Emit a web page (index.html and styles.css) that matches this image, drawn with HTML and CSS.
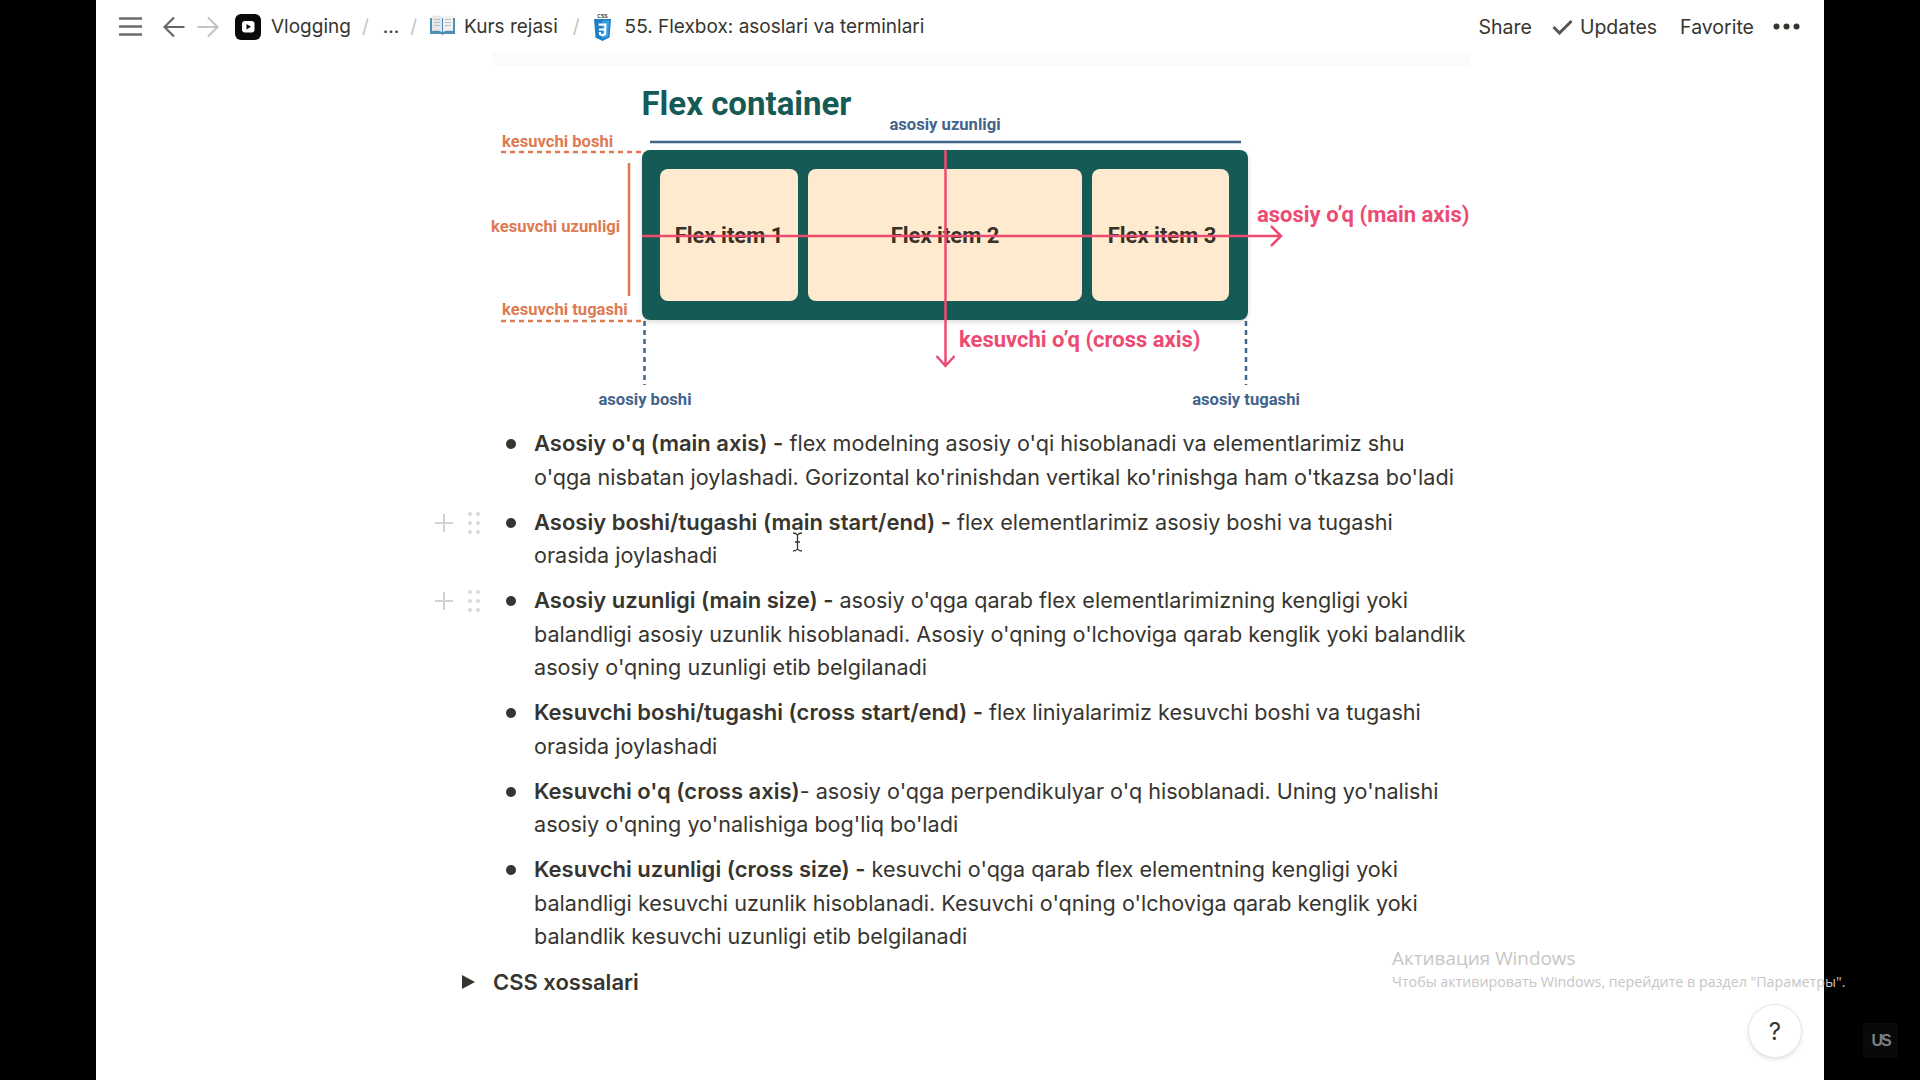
FILE: index.html
```html
<!DOCTYPE html>
<html lang="en">

<head>
    <meta charset="UTF-8">
    <title>55. Flexbox: asoslari va terminlari</title>
    <link rel="stylesheet" href="styles.css">
</head>

<body>
    <div class="app">
        <header class="topbar">
            <svg class="icon-menu" width="23" height="19" viewBox="0 0 23 19">
                <path d="M0 1.5H23M0 9.5H23M0 17.5H23" stroke="#6b6b6b" stroke-width="2.4" fill="none" />
            </svg>
            <svg class="icon-back" width="22" height="22" viewBox="0 0 22 22">
                <path d="M21.5 11H2M11 1.5L1.5 11L11 20.5" stroke="#666" stroke-width="2.2" fill="none" />
            </svg>
            <svg class="icon-forward" width="22" height="22" viewBox="0 0 22 22">
                <path d="M0.5 11H20M11 1.5L20.5 11L11 20.5" stroke="#c4c4c4" stroke-width="2.2" fill="none" />
            </svg>
            <svg class="icon-vlog" width="26" height="26" viewBox="0 0 26 26">
                <rect width="26" height="26" rx="6" fill="#0a0a0a" />
                <rect x="7" y="7" width="12.500" height="11.500" rx="3" fill="#fff" />
                <path d="M11.500 10L16 12.800L11.500 15.500Z" fill="#0a0a0a" />
            </svg>
            <span class="crumb crumb-vlog">Vlogging</span>
            <span class="slash slash-first">/</span>
            <span class="crumb crumb-more">...</span>
            <span class="slash slash-second">/</span>
            <svg class="icon-book" width="25" height="20" viewBox="0 0 25 20">
                <path d="M0 3H25V19H14L12.500 20L11 19H0Z" fill="#4f8db3" />
                <path d="M2 1C6 0 10 0.500 12 2V17C10 15.500 6 15.500 2 16Z" fill="#e6e8ea" />
                <path d="M23 1C19 0 15 0.500 13 2V17C15 15.500 19 15.500 23 16Z" fill="#f1f1f1" />
                <path d="M4 4.500H10M4 7.500H10M4 10.500H10M15 4.500H21M15 7.500H21M15 10.500H21" stroke="#b9bcc0" stroke-width="1" />
            </svg>
            <span class="crumb crumb-course">Kurs rejasi</span>
            <span class="slash slash-third">/</span>
            <svg class="icon-css" width="17" height="28" viewBox="0 0 17 28">
                <text class="css-label" x="8.500" y="4.500">CSS</text>
                <path d="M0 6H17L15.500 24.500L8.500 28L1.500 24.500Z" fill="#1f7fc4" />
                <path d="M8.500 7.500H15.300L14 23.500L8.500 26Z" fill="#3aa0e0" />
                <path d="M4.500 10.500H12.500L12 22L8.500 23.500L5 22L4.800 19H7L7.100 20.500L8.500 21L10 20.500L10.200 17.500H5V15.500H10.300L10.400 12.800H4.600Z" fill="#fff" />
            </svg>
            <span class="crumb crumb-page">55. Flexbox: asoslari va terminlari</span>

            <div class="actions">
                <span class="share">Share</span>
                <span class="updates">
                    <svg width="21" height="16" viewBox="0 0 21 16">
                        <path d="M1.500 8L7.500 14L19.500 2" stroke="#555" stroke-width="3" fill="none" />
                    </svg>
                    Updates
                </span>
                <span>Favorite</span>
                <svg class="icon-dots" width="27" height="7" viewBox="0 0 27 7">
                    <circle cx="3.500" cy="3.500" r="3" fill="#37352f" />
                    <circle cx="13.500" cy="3.500" r="3" fill="#37352f" />
                    <circle cx="23.500" cy="3.500" r="3" fill="#37352f" />
                </svg>
            </div>
        </header>

        <main class="content">
            <!-- diagram uses the page coordinates as its viewBox -->
            <svg class="diagram" width="977" height="374" viewBox="492 53 977 374">
                <rect x="492" y="53" width="977" height="13" fill="#fbfbfb" />
                <text class="d-title" x="641.500" y="114.500">Flex container</text>

                <text class="d-blue" x="945" y="130" text-anchor="middle">asosiy uzunligi</text>
                <path d="M650 142H1241" stroke="#41648b" stroke-width="2.500" />

                <text class="d-orange" x="502" y="147">kesuvchi boshi</text>
                <text class="d-orange" x="491" y="232">kesuvchi uzunligi</text>
                <text class="d-orange" x="502" y="315">kesuvchi tugashi</text>
                <path d="M501 152H642M501 321H642" stroke="#dd7a52" stroke-width="2.500" stroke-dasharray="5 4" />
                <path d="M629 163V296" stroke="#dd7a52" stroke-width="2.500" />

                <rect class="d-box" x="642" y="150" width="606" height="170" rx="8" fill="#165a55" />
                <rect x="660" y="169" width="138" height="132" rx="8" fill="#fdeacf" />
                <rect x="808" y="169" width="274" height="132" rx="8" fill="#fdeacf" />
                <rect x="1092" y="169" width="137" height="132" rx="8" fill="#fdeacf" />
                <text class="d-item" x="729" y="243" text-anchor="middle">Flex item 1</text>
                <text class="d-item" x="945" y="243" text-anchor="middle">Flex item 2</text>
                <text class="d-item" x="1162" y="243" text-anchor="middle">Flex item 3</text>

                <path d="M644.500 321V385M1246 321V385" stroke="#41648b" stroke-width="2.500" stroke-dasharray="5 4" />
                <text class="d-blue" x="645" y="405" text-anchor="middle">asosiy boshi</text>
                <text class="d-blue" x="1246" y="405" text-anchor="middle">asosiy tugashi</text>

                <path d="M642 236H1280M1271 226L1281 236L1271 246" stroke="#ee4b72" stroke-width="2.500" fill="none" />
                <path d="M945.500 150V365M936.500 356L945.500 366L954.500 356" stroke="#ee4b72" stroke-width="2.500" fill="none" />
                <text class="d-pink" x="1257" y="222">asosiy o’q (main axis)</text>
                <text class="d-pink" x="959" y="347">kesuvchi o’q (cross axis)</text>
            </svg>

            <ul class="list">
                <li class="item">
                    <b>Asosiy o'q (main axis) -</b> flex modelning asosiy o'qi hisoblanadi va elementlarimiz shu<br>o'qga nisbatan joylashadi. Gorizontal ko'rinishdan vertikal ko'rinishga ham o'tkazsa bo'ladi
                </li>
                <li class="item">
                    <svg class="handle" width="46" height="24" viewBox="0 0 46 24">
                        <path d="M10 3V21M1 12H19" stroke="#d3d3d1" stroke-width="2" />
                        <g fill="#d9d9d7">
                            <circle cx="36" cy="3" r="2" /><circle cx="44" cy="3" r="2" />
                            <circle cx="36" cy="12" r="2" /><circle cx="44" cy="12" r="2" />
                            <circle cx="36" cy="21" r="2" /><circle cx="44" cy="21" r="2" />
                        </g>
                    </svg>
                    <b>Asosiy boshi/tugashi (main start/end) -</b> flex elementlarimiz asosiy boshi va tugashi orasida joylashadi
                    <svg class="cursor" width="11" height="20" viewBox="0 0 11 20">
                        <path d="M1 1C3 1 4.500 1.500 5.500 3C6.500 1.500 8 1 10 1M5.500 3V17M1 19C3 19 4.500 18.500 5.500 17C6.500 18.500 8 19 10 19M3 10H8" stroke="#37352f" stroke-width="1.300" fill="none" />
                    </svg>
                </li>
                <li class="item">
                    <svg class="handle" width="46" height="24" viewBox="0 0 46 24">
                        <path d="M10 3V21M1 12H19" stroke="#d3d3d1" stroke-width="2" />
                        <g fill="#d9d9d7">
                            <circle cx="36" cy="3" r="2" /><circle cx="44" cy="3" r="2" />
                            <circle cx="36" cy="12" r="2" /><circle cx="44" cy="12" r="2" />
                            <circle cx="36" cy="21" r="2" /><circle cx="44" cy="21" r="2" />
                        </g>
                    </svg>
                    <b>Asosiy uzunligi (main size) -</b> asosiy o'qga qarab flex elementlarimizning kengligi yoki balandligi asosiy uzunlik hisoblanadi. Asosiy o'qning o'lchoviga qarab kenglik yoki balandlik asosiy o'qning uzunligi etib belgilanadi
                </li>
                <li class="item">
                    <b>Kesuvchi boshi/tugashi (cross start/end) -</b> flex liniyalarimiz kesuvchi boshi va tugashi orasida joylashadi
                </li>
                <li class="item">
                    <b>Kesuvchi o'q (cross axis)</b>- asosiy o'qga perpendikulyar o'q hisoblanadi. Uning yo'nalishi asosiy o'qning yo'nalishiga bog'liq bo'ladi
                </li>
                <li class="item">
                    <b>Kesuvchi uzunligi (cross size) -</b> kesuvchi o'qga qarab flex elementning kengligi yoki balandligi kesuvchi uzunlik hisoblanadi. Kesuvchi o'qning o'lchoviga qarab kenglik yoki balandlik kesuvchi uzunligi etib belgilanadi
                </li>
            </ul>

            <div class="toggle">
                <span class="toggle-arrow"></span>
                <b>CSS xossalari</b>
            </div>
        </main>

        <div class="watermark">
            <div class="watermark-title">Активация Windows</div>
            <div class="watermark-text">Чтобы активировать Windows, перейдите в раздел "Параметры".</div>
        </div>

        <div class="help">?</div>
    </div>

    <div class="corner-logo">US</div>
</body>

</html>
```

FILE: styles.css
```css
body {
    margin: 0;
    background-color: #000;
    color: #37352f;
    font-family: "Inter", "Liberation Sans", sans-serif;
    overflow: hidden;
}

.app {
    position: relative;
    width: 1728px;
    height: 1080px;
    margin: 0 auto;
    background-color: #fff;
}

/* top bar */
.topbar {
    display: flex;
    align-items: center;
    height: 53px;
    padding-left: 23px;
    padding-right: 24px;
    font-size: 19px;
}

.icon-back {
    margin-left: 21px;
}

.icon-forward {
    margin-left: 12px;
}

.icon-vlog {
    margin-left: 16px;
    margin-right: 10px;
}

.slash {
    color: #c3c2c0;
}

.slash-first {
    margin-left: 11px;
}

.crumb-more {
    margin-left: 14px;
}

.slash-second {
    margin-left: 11px;
}

.icon-book {
    margin-left: 13px;
    margin-right: 9px;
    margin-top: -3px;
}

.slash-third {
    margin-left: 15px;
}

.icon-css {
    margin-left: 14px;
    margin-right: 14px;
}

.css-label {
    font-family: "Liberation Sans", sans-serif;
    font-size: 5px;
    font-weight: 700;
    fill: #333;
    text-anchor: middle;
}

.actions {
    display: flex;
    align-items: center;
    margin-left: auto;
    gap: 23px;
    font-size: 19.500px;
}

.share {
    margin-right: -3px;
}

.updates {
    display: flex;
    align-items: center;
    gap: 7px;
}

.icon-dots {
    margin-left: -4px;
}

/* page content */
.content {
    width: 977px;
    margin-left: 396px;
}

.diagram {
    display: block;
    overflow: visible;
}

.d-title {
    font-family: "Roboto", sans-serif;
    font-size: 33px;
    font-weight: 700;
    fill: #165a55;
}

.d-box {
    filter: drop-shadow(0 2px 2px rgba(0, 0, 0, 0.15));
}

.d-blue {
    font-family: "Roboto", sans-serif;
    font-size: 16.600px;
    font-weight: 700;
    fill: #41648b;
}

.d-orange {
    font-family: "Roboto", sans-serif;
    font-size: 16.600px;
    font-weight: 700;
    fill: #dd7a52;
}

.d-item {
    font-family: "Roboto", sans-serif;
    font-size: 22px;
    font-weight: 700;
    fill: #3a3026;
}

.d-pink {
    font-family: "Roboto", sans-serif;
    font-size: 22px;
    font-weight: 700;
    fill: #ee4b72;
}

.list {
    margin: 0;
    padding: 0;
    list-style: none;
}

.item {
    position: relative;
    margin-bottom: 11.600px;
    padding-left: 42px;
    font-size: 21.600px;
    line-height: 33.500px;
}

.item b,
.toggle b {
    font-size: 22px;
    font-weight: 600;
}

.item::before {
    content: "";
    position: absolute;
    left: 14px;
    top: 12px;
    width: 10px;
    height: 10px;
    border-radius: 50%;
    background-color: #37352f;
}

.handle {
    position: absolute;
    left: -58px;
    top: 5px;
}

.cursor {
    position: absolute;
    left: 300px;
    top: 26px;
}

.toggle {
    display: flex;
    align-items: center;
    margin-left: -30px;
    line-height: 33.500px;
}

.toggle-arrow {
    width: 0;
    height: 0;
    margin-right: 18px;
    border-left: 13px solid #37352f;
    border-top: 7px solid transparent;
    border-bottom: 7px solid transparent;
}

/* overlays */
.watermark {
    position: absolute;
    left: 1296px;
    top: 945px;
    width: 480px;
    color: #c6c6c6;
    font-family: "Open Sans", sans-serif;
}

.watermark-title {
    font-size: 18.900px;
    line-height: 27px;
}

.watermark-text {
    font-size: 14.250px;
    line-height: 20px;
}

.help {
    position: absolute;
    left: 1653px;
    top: 1005px;
    display: flex;
    align-items: center;
    justify-content: center;
    width: 52px;
    height: 52px;
    border-radius: 50%;
    background-color: #fff;
    box-shadow: 0 0 0 1px #e6e6e6, 0 2px 5px rgba(0, 0, 0, 0.15);
    font-size: 24px;
}

.corner-logo {
    position: absolute;
    left: 1863px;
    top: 1023px;
    display: flex;
    align-items: center;
    justify-content: center;
    width: 35px;
    height: 35px;
    background-color: #08090a;
    color: #7f7f7f;
    font-family: "Liberation Sans", sans-serif;
    font-size: 16px;
    font-weight: 700;
    letter-spacing: -2px;
}
```
